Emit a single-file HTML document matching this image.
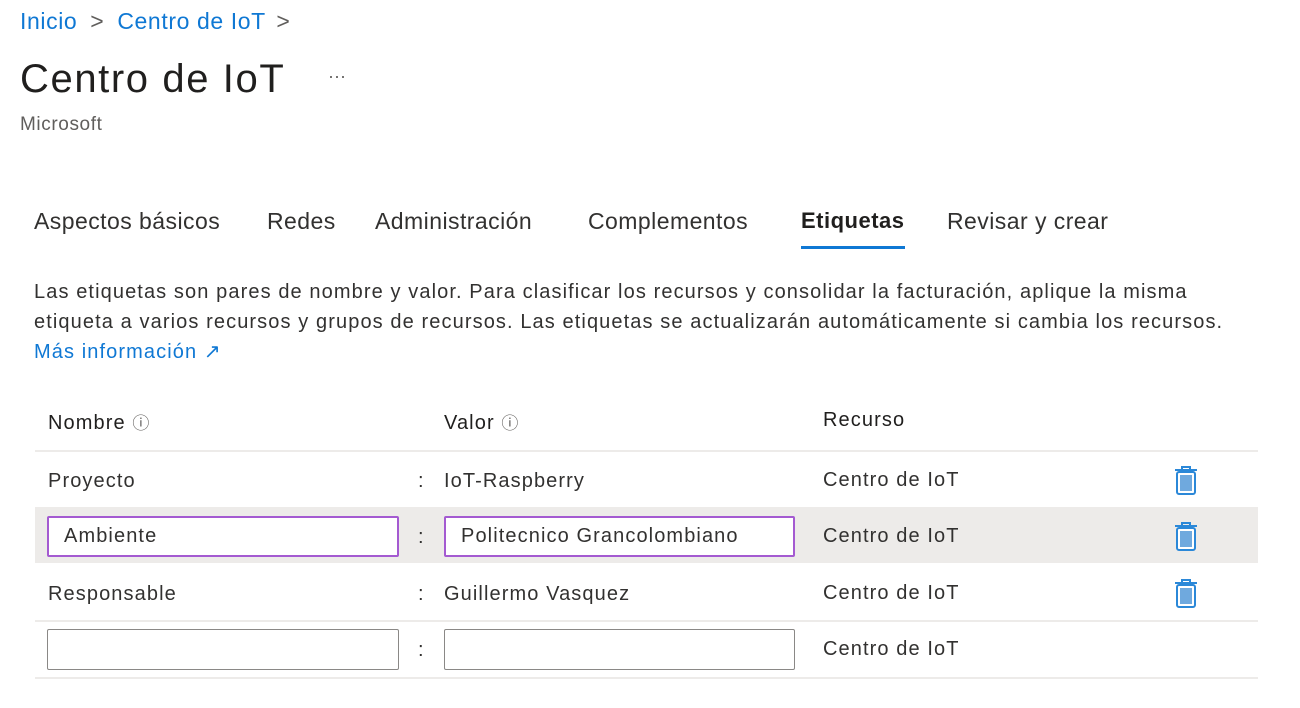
<!DOCTYPE html>
<html><head><meta charset="utf-8"><style>
*{margin:0;padding:0;box-sizing:border-box}
body{width:1300px;height:708px;background:#fff;font-family:"Liberation Sans",sans-serif;color:#323130;position:relative;overflow:hidden}
.a{position:absolute;white-space:nowrap}
.blue{color:#0f78d4}
.tab{font-size:23px;color:#323130;top:208px;letter-spacing:.45px}
.t{font-size:20px;letter-spacing:1.1px}
.box{position:absolute;height:41px;border:1.5px solid #8a8886;border-radius:2px;background:#fff;font-size:20px;padding:7px 15px;letter-spacing:1.1px}
.pur{border:2px solid #a45ad1}
.line{position:absolute;left:35px;width:1223px;height:2px;background:#edebe9}
.trash{position:absolute;left:1174px}
</style></head><body>
<div class="a blue" style="left:20px;top:8px;font-size:23px;letter-spacing:.6px">Inicio <span style="color:#605e5c;margin:0 6px">&gt;</span> Centro de IoT <span style="color:#605e5c;margin-left:4px">&gt;</span></div>
<div class="a" style="left:20px;top:57px;font-size:40px;color:#201f1e;letter-spacing:1.6px">Centro de IoT</div>
<div class="a" style="left:328px;top:66px;font-size:18px;color:#605e5c">···</div>
<div class="a" style="left:20px;top:114px;font-size:19px;color:#605e5c;letter-spacing:.6px">Microsoft</div>

<div class="a tab" style="left:34px">Aspectos básicos</div>
<div class="a tab" style="left:267px">Redes</div>
<div class="a tab" style="left:375px">Administración</div>
<div class="a tab" style="left:588px">Complementos</div>
<div class="a tab" style="left:801px;color:#201f1e;font-weight:bold;font-size:22px;letter-spacing:.5px">Etiquetas</div>
<div class="a" style="left:801px;top:246px;width:104px;height:3px;background:#0f78d4"></div>
<div class="a tab" style="left:947px">Revisar y crear</div>

<div class="a t" style="left:34px;top:277px;line-height:30px">Las etiquetas son pares de nombre y valor. Para clasificar los recursos y consolidar la facturación, aplique la misma<br>etiqueta a varios recursos y grupos de recursos. Las etiquetas se actualizarán automáticamente si cambia los recursos.<br><span class="blue">Más información ↗</span></div>

<div class="a t" style="left:48px;top:409px;color:#201f1e">Nombre <span style="font-size:17px;color:#605e5c">ⓘ</span></div>
<div class="a t" style="left:444px;top:409px;color:#201f1e">Valor <span style="font-size:17px;color:#605e5c">ⓘ</span></div>
<div class="a t" style="left:823px;top:409px;color:#201f1e">Recurso</div>
<div class="line" style="top:450px"></div>

<div class="a" style="left:35px;top:507px;width:1223px;height:56px;background:#edebe9"></div>

<div class="a t" style="left:48px;top:470px">Proyecto</div>
<div class="a t" style="left:418px;top:470px">:</div>
<div class="a t" style="left:444px;top:470px">IoT-Raspberry</div>
<div class="a t" style="left:823px;top:469px">Centro de IoT</div>

<div class="box pur" style="left:47px;top:516px;width:352px">Ambiente</div>
<div class="a t" style="left:418px;top:526px">:</div>
<div class="box pur" style="left:444px;top:516px;width:351px">Politecnico Grancolombiano</div>
<div class="a t" style="left:823px;top:525px">Centro de IoT</div>

<div class="a t" style="left:48px;top:583px">Responsable</div>
<div class="a t" style="left:418px;top:583px">:</div>
<div class="a t" style="left:444px;top:583px">Guillermo Vasquez</div>
<div class="a t" style="left:823px;top:582px">Centro de IoT</div>
<div class="line" style="top:620px"></div>

<div class="box" style="left:47px;top:629px;width:352px"></div>
<div class="a t" style="left:418px;top:639px">:</div>
<div class="box" style="left:444px;top:629px;width:351px"></div>
<div class="a t" style="left:823px;top:638px">Centro de IoT</div>
<div class="line" style="top:677px"></div>

<svg class="trash" style="top:466px" width="24" height="30" viewBox="0 0 24 30"><path d="M1 4h22M8 4V1h8v3" stroke="#2b88d8" stroke-width="2" fill="none"/><rect x="3" y="6" width="18" height="22" rx="2" fill="#fff" stroke="#2b88d8" stroke-width="2"/><rect x="6" y="9" width="12" height="16" fill="#6fa9de"/></svg>
<svg class="trash" style="top:522px" width="24" height="30" viewBox="0 0 24 30"><path d="M1 4h22M8 4V1h8v3" stroke="#2b88d8" stroke-width="2" fill="none"/><rect x="3" y="6" width="18" height="22" rx="2" fill="#fff" stroke="#2b88d8" stroke-width="2"/><rect x="6" y="9" width="12" height="16" fill="#6fa9de"/></svg>
<svg class="trash" style="top:579px" width="24" height="30" viewBox="0 0 24 30"><path d="M1 4h22M8 4V1h8v3" stroke="#2b88d8" stroke-width="2" fill="none"/><rect x="3" y="6" width="18" height="22" rx="2" fill="#fff" stroke="#2b88d8" stroke-width="2"/><rect x="6" y="9" width="12" height="16" fill="#6fa9de"/></svg>
</body></html>
